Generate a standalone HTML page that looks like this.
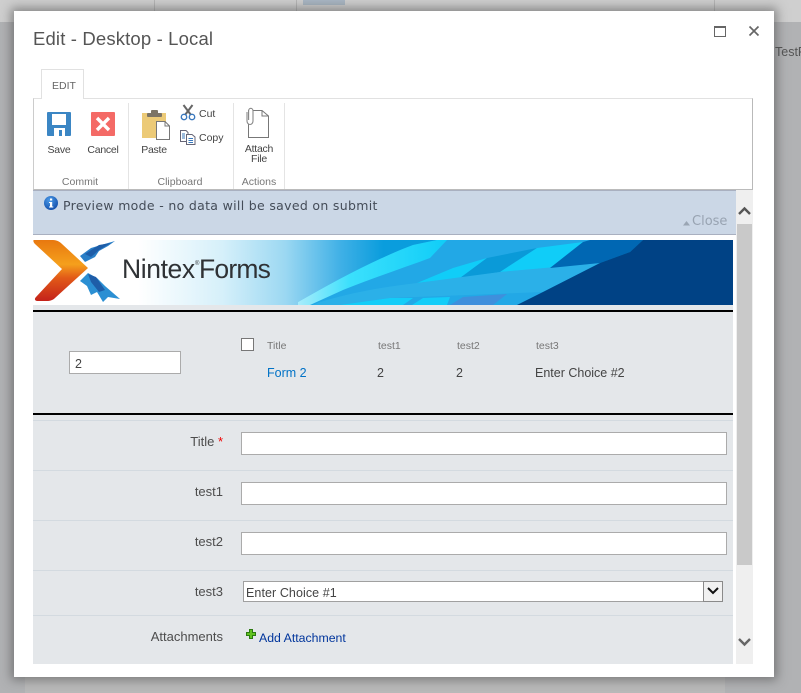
<!DOCTYPE html>
<html><head><meta charset="utf-8">
<style>
html,body{margin:0;padding:0}
body{width:801px;height:693px;overflow:hidden;position:relative;background:#b1b2b4;font-family:"Liberation Sans",sans-serif;color:#444}
.a{position:absolute}
.t{position:absolute;white-space:nowrap;line-height:14px}
.in{position:absolute;box-sizing:border-box;background:#fff;border:1px solid #ababab}
.ln{position:absolute;left:33px;width:700px;height:1px;background:#d3dae0}
.lb{position:absolute;right:578px;white-space:nowrap;font-size:13px;color:#4d4d4d;line-height:14px}
.rb{font-size:10.5px;color:#444;text-align:center;letter-spacing:-.25px}
.gp{font-size:10.5px;color:#777;text-align:center}
.hd{font-size:10.5px;color:#777}
.v{font-size:12.5px;color:#444}
</style></head><body>
<div class="a" style="left:0;top:0;width:801px;height:22px;background:#cfcfcf"></div>
<div class="a" style="left:154px;top:0;width:1px;height:12px;background:#b5b5b5"></div>
<div class="a" style="left:296px;top:0;width:1px;height:12px;background:#b5b5b5"></div>
<div class="a" style="left:714px;top:0;width:1px;height:12px;background:#b5b5b5"></div>
<div class="a" style="left:303px;top:0;width:42px;height:5px;background:#a9b6c3"></div>
<div class="a" style="left:25px;top:677px;width:700px;height:16px;background:#b9b9b9"></div>
<div class="t" style="left:775px;top:45px;font-size:12.5px;color:#555">TestF</div>
<div class="a" style="left:14px;top:11px;width:760px;height:666px;background:#fff;box-shadow:0 0 10px 3px rgba(70,70,70,.55)"></div>

<div class="t" style="left:33px;top:28px;font-size:18.5px;line-height:22px;color:#555;letter-spacing:.15px">Edit - Desktop - Local</div>
<svg class="a" style="left:714px;top:26px" width="12" height="11"><rect x=".5" y=".5" width="11" height="10" fill="none" stroke="#666"/><rect x="0" y="0" width="12" height="2" fill="#666"/></svg>
<svg class="a" style="left:747px;top:24px" width="14" height="14"><path d="M2.5 2.5L11.5 11.5M11.5 2.5L2.5 11.5" stroke="#666" stroke-width="1.7"/></svg>

<!-- Tab -->
<div class="a" style="left:41px;top:69px;width:43px;height:30px;box-sizing:border-box;border:1px solid #e1e1e1;border-bottom:0;background:#fff;z-index:2"></div>
<div class="t" style="left:52px;top:79px;font-size:10.5px;color:#666;z-index:3">EDIT</div>
<!-- Ribbon -->
<div class="a" style="left:33px;top:98px;width:720px;height:92px;box-sizing:border-box;border:1px solid #e1e1e1;border-left-color:#ccc;border-right-color:#b9b9b9;border-bottom:1px solid #bbb"></div>
<div class="a" style="left:128px;top:103px;width:1px;height:86px;background:#e4e4e4"></div>
<div class="a" style="left:233px;top:103px;width:1px;height:86px;background:#e4e4e4"></div>
<div class="a" style="left:284px;top:103px;width:1px;height:86px;background:#e4e4e4"></div>

<!-- Save -->
<svg class="a" style="left:47px;top:112px" width="24" height="24"><rect width="24" height="24" rx="1" fill="#3b86c4"/><rect x="5" y="2" width="14" height="11" fill="#fff"/><rect x="7" y="16" width="11" height="8" fill="#fff"/><rect x="12" y="18" width="3" height="6" fill="#3b86c4"/></svg>
<div class="t rb" style="left:39px;top:143px;width:40px">Save</div>
<!-- Cancel -->
<svg class="a" style="left:91px;top:112px" width="24" height="24"><rect width="24" height="24" rx="1" fill="#f46a66"/><path d="M6 6L18 18M18 6L6 18" stroke="#fff" stroke-width="3.4"/></svg>
<div class="t rb" style="left:83px;top:143px;width:40px">Cancel</div>
<div class="t gp" style="left:59px;top:175px;width:42px">Commit</div>
<!-- Paste -->
<svg class="a" style="left:141px;top:109px" width="30" height="32"><path d="M1 4H25V29H1Z" fill="#ecca77"/><rect x="10" y="1" width="7" height="4" rx="1" fill="#7c7466"/><rect x="6" y="4" width="15" height="4" rx="1" fill="#7c7466"/><path d="M15.5 12.5H24L28.5 17V30.5H15.5Z" fill="#fff" stroke="#777"/><path d="M24 12.5V17H28.5" fill="none" stroke="#777"/></svg>
<div class="t rb" style="left:134px;top:143px;width:40px">Paste</div>
<!-- Cut -->
<svg class="a" style="left:180px;top:104px" width="16" height="17"><path d="M3.5 1L11 11M12.5 1L5 11" stroke="#666" stroke-width="2"/><circle cx="4" cy="13" r="2.7" fill="#fff" stroke="#3a78bd" stroke-width="1.4"/><circle cx="12" cy="13" r="2.7" fill="#fff" stroke="#3a78bd" stroke-width="1.4"/></svg>
<div class="t rb" style="left:199px;top:107px;letter-spacing:0">Cut</div>
<!-- Copy -->
<svg class="a" style="left:180px;top:130px" width="16" height="15"><path d="M.5 .5H6L8 2.5V11.5H.5Z" fill="#fff" stroke="#667"/><path d="M6.5 4.5H12L15 7V14.5H6.5Z" fill="#fff" stroke="#667"/><path d="M2 4H5M2 6H5M2 8H5M8.5 8.5H13M8.5 10.5H13M8.5 12.5H13" stroke="#3a78bd"/></svg>
<div class="t rb" style="left:199px;top:131px;letter-spacing:0">Copy</div>
<div class="t gp" style="left:150px;top:175px;width:60px">Clipboard</div>
<!-- Attach -->
<svg class="a" style="left:245px;top:107px" width="25" height="32"><path d="M3.5 3.5H17L23.5 9V30.5H3.5Z" fill="#fff" stroke="#777"/><path d="M17 3.5V9H23.5" fill="none" stroke="#777"/><path d="M2 5V14A3 3.5 0 0 0 8 14V4A2.2 2.7 0 0 0 3.6 4V13" fill="#fff" stroke="#888" stroke-width="1.1"/></svg>
<div class="t rb" style="left:239px;top:144px;width:40px;line-height:10px">Attach<br>File</div>
<div class="t gp" style="left:238px;top:175px;width:42px">Actions</div>

<!-- Preview bar -->
<div class="a" style="left:33px;top:190px;width:703px;height:45px;box-sizing:border-box;background:#cbd7e6;border-top:1px solid #a9b0c0;border-bottom:1px solid #a9b0c0"></div>
<svg class="a" style="left:44px;top:196px" width="14" height="14"><defs><radialGradient id="ib" cx=".4" cy=".3" r=".8"><stop offset="0" stop-color="#4c9be8"/><stop offset="1" stop-color="#0d47a5"/></radialGradient></defs><circle cx="7" cy="7" r="7" fill="url(#ib)"/><rect x="6" y="2.5" width="2.2" height="2" fill="#fff"/><path d="M5 6H8.2V10.5H9.3V11.5H5V10.5H6V7H5Z" fill="#fff"/></svg>
<div class="t" style="left:63px;top:199px;font-family:'DejaVu Sans',sans-serif;font-size:12.5px;color:#444c58;letter-spacing:.32px">Preview mode - no data will be saved on submit</div>
<svg class="a" style="left:683px;top:220px" width="8" height="6"><path d="M0 5.5L3.5 1L7 5.5Z" fill="#9aa5b3"/></svg>
<div class="t" style="left:692px;top:215px;font-family:'DejaVu Sans',sans-serif;font-size:13px;color:#98a3b1">Close</div>

<!-- Scrollbar -->
<div class="a" style="left:736px;top:190px;width:17px;height:474px;background:#efefef"></div>
<div class="a" style="left:737px;top:224px;width:15px;height:341px;background:#c9c9c9"></div>
<svg class="a" style="left:738px;top:206px" width="13" height="10"><path d="M1 8L6.5 2.5L12 8" fill="none" stroke="#555" stroke-width="2.4"/></svg>
<svg class="a" style="left:738px;top:637px" width="13" height="10"><path d="M1 2L6.5 7.5L12 2" fill="none" stroke="#666" stroke-width="2.4"/></svg>

<!-- Banner -->
<svg class="a" style="left:33px;top:240px" width="700" height="65" viewBox="0 0 700 65">
<defs>
<linearGradient id="bg" x1="0" x2="1" y1="0" y2="0"><stop offset="0" stop-color="#fff"/><stop offset=".15" stop-color="#fff"/><stop offset=".27" stop-color="#d6f0fa"/><stop offset=".36" stop-color="#9cd8f2"/><stop offset=".44" stop-color="#3fb0e6"/><stop offset=".5" stop-color="#0a9ddd"/><stop offset="1" stop-color="#0a9ddd"/></linearGradient>
<linearGradient id="or" x1="0" x2="0" y1="0" y2="1"><stop offset="0" stop-color="#e8780f"/><stop offset=".4" stop-color="#f5a01c"/><stop offset=".62" stop-color="#e25a18"/><stop offset="1" stop-color="#c4221a"/></linearGradient>
<linearGradient id="cy" x1="0" x2="1" y1="0" y2="0"><stop offset="0" stop-color="#a8ecfb"/><stop offset=".35" stop-color="#3be0fc"/><stop offset="1" stop-color="#10cdf8"/></linearGradient>
</defs>
<rect width="700" height="65" fill="url(#bg)"/>
<path d="M265 65L265 62C300 42 345 18 380 5L404 0H557L517 28L510 52L484 65Z" fill="#22a8e6"/>
<path d="M265 65V62C300 42 345 18 380 5L404 0H414L397 18C370 28 340 38 310 50L277 65Z" fill="url(#cy)"/>
<path d="M384 43L420 28L454 18L427 38Z" fill="#10cdf8"/>
<path d="M427 38L454 18L504 8L467 32Z" fill="#0a9ad8"/>
<path d="M467 32L504 8L550 2L517 28Z" fill="#10cdf8"/>
<path d="M287 62C320 52 350 47 384 43L467 32L567 23L510 52L357 58L307 65H280Z" fill="#2bb0e8"/>
<path d="M307 65L357 58H380L370 65ZM379 65L390 58L417 57L414 65Z" fill="#13cdf8"/>
<path d="M417 65L430 57L474 54L460 65Z" fill="#3f8fdc"/>
<path d="M517 28L550 2L557 0H610L597 12L567 23Z" fill="#0067b3"/>
<path d="M484 65L510 52L567 23L597 12L610 0H700V65Z" fill="#004285"/>
<path d="M1 0H20C24 0 27 2 29 4L55 28L22 58C20 60 17 61 14 61H4C2 61 1 59 3 57L29 29L2 4C0 2 0 0 1 0Z" fill="url(#or)"/>
<path d="M47 16L58 8L68 5L82 1L75 6L66 11L62 17L52 22Z" fill="#2a7fc7"/>
<path d="M52 14L66 5L78 3L66 10L58 17Z" fill="#1e5da8"/>
<path d="M47 41L55 33L64 38L72 46L87 59L75 57L70 62L64 52L58 55L54 46Z" fill="#2b8fd3"/>
<path d="M55 34L63 37L72 50L66 52L58 42Z" fill="#1e5da8"/>
<text x="89" y="38" font-family="Liberation Sans,sans-serif" font-size="26.5" letter-spacing="-.4" fill="#2f3235">Nintex</text>
<text x="162" y="25" font-family="Liberation Sans,sans-serif" font-size="6" fill="#2f3235">®</text>
<text x="166" y="38" font-family="Liberation Sans,sans-serif" font-size="26.5" letter-spacing="-.8" fill="#2f3235">Forms</text>
</svg>

<!-- Form area -->
<div class="a" style="left:33px;top:305px;width:700px;height:359px;background:#e4e7ea"></div>
<div class="a" style="left:33px;top:310px;width:700px;height:2px;background:#000"></div>
<div class="a" style="left:33px;top:413px;width:700px;height:2px;background:#000"></div>
<div class="ln" style="top:420px"></div>
<div class="ln" style="top:470px"></div>
<div class="ln" style="top:520px"></div>
<div class="ln" style="top:570px"></div>
<div class="ln" style="top:615px"></div>

<div class="in" style="left:69px;top:351px;width:112px;height:23px"></div>
<div class="t v" style="left:75px;top:357px">2</div>
<div class="a" style="left:241px;top:338px;width:13px;height:13px;box-sizing:border-box;background:#fff;border:1px solid #777"></div>
<div class="t hd" style="left:267px;top:339px">Title</div>
<div class="t hd" style="left:378px;top:339px">test1</div>
<div class="t hd" style="left:457px;top:339px">test2</div>
<div class="t hd" style="left:536px;top:339px">test3</div>
<div class="t v" style="left:267px;top:366px;color:#0072c6">Form 2</div>
<div class="t v" style="left:377px;top:366px">2</div>
<div class="t v" style="left:456px;top:366px">2</div>
<div class="t v" style="left:535px;top:366px">Enter Choice #2</div>

<div class="lb" style="top:435px">Title <span style="color:#e00">*</span></div>
<div class="in" style="left:241px;top:432px;width:486px;height:23px"></div>
<div class="lb" style="top:485px">test1</div>
<div class="in" style="left:241px;top:482px;width:486px;height:23px"></div>
<div class="lb" style="top:535px">test2</div>
<div class="in" style="left:241px;top:532px;width:486px;height:23px"></div>
<div class="lb" style="top:585px">test3</div>
<div class="in" style="left:243px;top:581px;width:480px;height:21px;border-color:#a0a0a0"></div>
<div class="t v" style="left:246px;top:586px;letter-spacing:.08px">Enter Choice #1</div>
<div class="a" style="left:703px;top:581px;width:20px;height:21px;box-sizing:border-box;background:#f1f1f1;border:1px solid #8a8a8a"></div>
<svg class="a" style="left:706px;top:586px" width="14" height="10"><path d="M2 2L7 7L12 2" fill="none" stroke="#111" stroke-width="2"/></svg>
<div class="lb" style="top:630px">Attachments</div>
<svg class="a" style="left:246px;top:629px" width="10" height="10"><path d="M3.5 .5H6.5V3.5H9.5V6.5H6.5V9.5H3.5V6.5H.5V3.5H3.5Z" fill="#62c21f" stroke="#2c7a10"/></svg>
<div class="t" style="left:259px;top:631px;font-size:12.3px;color:#00359c">Add Attachment</div>
</body></html>
